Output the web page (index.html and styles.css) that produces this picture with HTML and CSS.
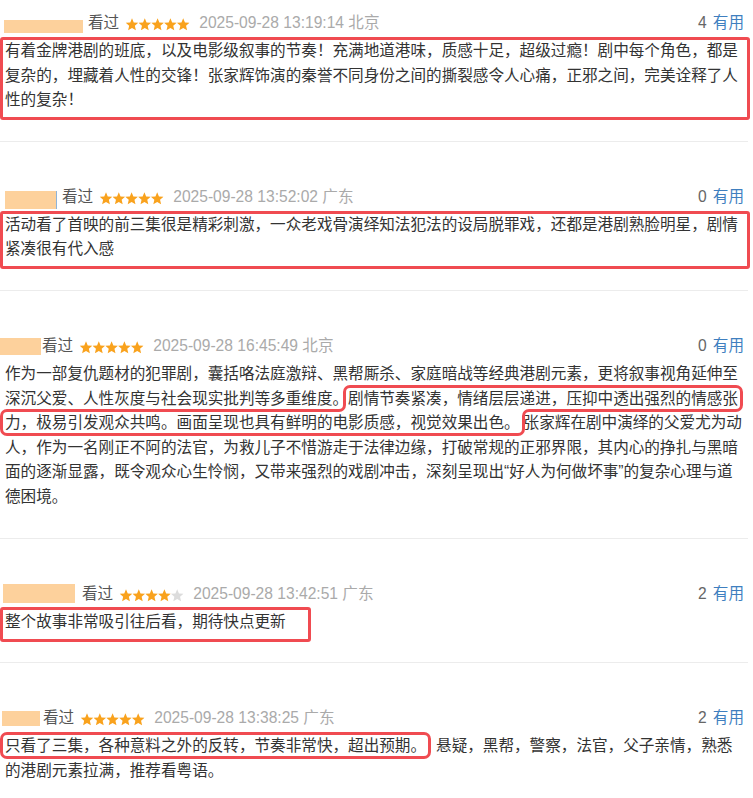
FILE: index.html
```html
<!DOCTYPE html>
<html lang="zh-CN">
<head>
  <meta charset="UTF-8" />
  <meta name="viewport" content="width=device-width, initial-scale=1.0"/>
  <title>短评</title>
  <link rel="stylesheet" href="styles.css">
</head>
<body>

<svg class="defs" aria-hidden="true">
  <symbol id="star" viewBox="0 0 13 13">
    <polygon points="6.5,0.3 8.26,4.47 12.78,4.86 9.35,7.83 10.38,12.24 6.5,9.9 2.62,12.24 3.65,7.83 0.22,4.86 4.74,4.47"/>
  </symbol>
</svg>

<ul class="comment-list">

  <li class="comment-item">
    <div class="comment-info">
      <span class="user-mask mask-1"></span>
      <span class="watched">看过</span>
      <svg class="stars" viewBox="0 0 64 13">
        <use href="#star" class="on" x="0" width="13" height="13"/>
        <use href="#star" class="on" x="12.8" width="13" height="13"/>
        <use href="#star" class="on" x="25.6" width="13" height="13"/>
        <use href="#star" class="on" x="38.4" width="13" height="13"/>
        <use href="#star" class="on" x="51.2" width="13" height="13"/>
      </svg>
      <span class="comment-time">2025-09-28 13:19:14 北京</span>
      <span class="votes"><span class="vote-count">4</span><a class="vote-useful">有用</a></span>
    </div>
    <p class="comment-content marked">有着金牌港剧的班底，以及电影级叙事的节奏！充满地道港味，质感十足，超级过瘾！剧中每个角色，都是复杂的，埋藏着人性的交锋！张家辉饰演的秦誉不同身份之间的撕裂感令人心痛，正邪之间，完美诠释了人性的复杂！</p>
  </li>

  <li class="comment-item">
    <div class="comment-info">
      <span class="user-mask mask-2"></span>
      <span class="watched">看过</span>
      <svg class="stars" viewBox="0 0 64 13">
        <use href="#star" class="on" x="0" width="13" height="13"/>
        <use href="#star" class="on" x="12.8" width="13" height="13"/>
        <use href="#star" class="on" x="25.6" width="13" height="13"/>
        <use href="#star" class="on" x="38.4" width="13" height="13"/>
        <use href="#star" class="on" x="51.2" width="13" height="13"/>
      </svg>
      <span class="comment-time">2025-09-28 13:52:02 广东</span>
      <span class="votes"><span class="vote-count">0</span><a class="vote-useful">有用</a></span>
    </div>
    <p class="comment-content marked">活动看了首映的前三集很是精彩刺激，一众老戏骨演绎知法犯法的设局脱罪戏，还都是港剧熟脸明星，剧情紧凑很有代入感</p>
  </li>

  <li class="comment-item">
    <div class="comment-info">
      <span class="user-mask mask-3"></span>
      <span class="watched">看过</span>
      <svg class="stars" viewBox="0 0 64 13">
        <use href="#star" class="on" x="0" width="13" height="13"/>
        <use href="#star" class="on" x="12.8" width="13" height="13"/>
        <use href="#star" class="on" x="25.6" width="13" height="13"/>
        <use href="#star" class="on" x="38.4" width="13" height="13"/>
        <use href="#star" class="on" x="51.2" width="13" height="13"/>
      </svg>
      <span class="comment-time">2025-09-28 16:45:49 北京</span>
      <span class="votes"><span class="vote-count">0</span><a class="vote-useful">有用</a></span>
    </div>
    <p class="comment-content">作为一部复仇题材的犯罪剧，囊括咯法庭激辩、黑帮厮杀、家庭暗战等经典港剧元素，更将叙事视角延伸至深沉父爱、人性灰度与社会现实批判等多重维度。<span class="mark-inline mark-mid">剧情节奏紧凑，情绪层层递进，压抑中透出强烈的情感张力，极易引发观众共鸣。画面呈现也具有鲜明的电影质感，视觉效果出色。</span>张家辉在剧中演绎的父爱尤为动人，作为一名刚正不阿的法官，为救儿子不惜游走于法律边缘，打破常规的正邪界限，其内心的挣扎与黑暗面的逐渐显露，既令观众心生怜悯，又带来强烈的戏剧冲击，深刻呈现出“好人为何做坏事”的复杂心理与道德困境。</p>
  </li>

  <li class="comment-item">
    <div class="comment-info">
      <span class="user-mask mask-4"></span>
      <span class="watched">看过</span>
      <svg class="stars" viewBox="0 0 64 13">
        <use href="#star" class="on" x="0" width="13" height="13"/>
        <use href="#star" class="on" x="12.8" width="13" height="13"/>
        <use href="#star" class="on" x="25.6" width="13" height="13"/>
        <use href="#star" class="on" x="38.4" width="13" height="13"/>
        <use href="#star" class="off" x="51.2" width="13" height="13"/>
      </svg>
      <span class="comment-time">2025-09-28 13:42:51 广东</span>
      <span class="votes"><span class="vote-count">2</span><a class="vote-useful">有用</a></span>
    </div>
    <p class="comment-content"><span class="mark-box">整个故事非常吸引往后看，期待快点更新</span></p>
  </li>

  <li class="comment-item">
    <div class="comment-info">
      <span class="user-mask mask-5"></span>
      <span class="watched">看过</span>
      <svg class="stars" viewBox="0 0 64 13">
        <use href="#star" class="on" x="0" width="13" height="13"/>
        <use href="#star" class="on" x="12.8" width="13" height="13"/>
        <use href="#star" class="on" x="25.6" width="13" height="13"/>
        <use href="#star" class="on" x="38.4" width="13" height="13"/>
        <use href="#star" class="on" x="51.2" width="13" height="13"/>
      </svg>
      <span class="comment-time">2025-09-28 13:38:25 广东</span>
      <span class="votes"><span class="vote-count">2</span><a class="vote-useful">有用</a></span>
    </div>
    <p class="comment-content"><span class="mark-inline mark-tail">只看了三集，各种意料之外的反转，节奏非常快，超出预期。</span>悬疑，黑帮，警察，法官，父子亲情，熟悉的港剧元素拉满，推荐看粤语。</p>
  </li>

</ul>

</body>
</html>
```

FILE: styles.css
```css
body {
  margin: 0;
  background: #fff;
  font-family: "Liberation Sans", Arial, "Noto Sans CJK SC", sans-serif;
  color: #333;
}
.defs {
  display: none;
}
.comment-list {
  list-style: none;
  margin: 0;
  padding: 12px 0 0;
  width: 748px;
}
.comment-item {
  padding: 44px 0 28px;
  border-bottom: 1px solid #ececec;
}
.comment-item:first-child {
  padding-top: 0;
}
.comment-info {
  display: flex;
  align-items: center;
  height: 22px;
  padding-right: 4px;
  font-size: 15.6px;
  line-height: 22px;
}
.user-mask {
  background: #fdd19c;
  flex-shrink: 0;
}
.mask-1 { width: 79px; height: 13px; margin: 7px 5px 0 4px; }
.mask-2 { width: 50px; height: 18px; margin: 6px 5px 0 5px; border-right: 1px solid #8fb4d9; padding-right: 1px; }
.mask-3 { width: 41px; height: 17px; margin: 1px 1px 0 0; }
.mask-4 { width: 72px; height: 19px; margin: 0 7px 0 3px; }
.mask-5 { width: 38px; height: 15px; margin: 1px 3px 0 2px; }

.watched {
  color: #555;
}
.stars {
  width: 65px;
  height: 13px;
  margin: 3px 9px 0 6px;
}
.stars .on { fill: #f9a21d; }
.stars .off { fill: #dcdcdc; }
.comment-time {
  color: #aaa;
}
.votes {
  margin-left: auto;
  color: #666;
}
.vote-useful {
  margin-left: 6px;
  color: #3f7fbf;
  text-decoration: none;
}
.comment-content {
  margin: 5px 0 0;
  padding: 0 5px;
  font-size: 15.6px;
  line-height: 24.6px;
  color: #333;
}

/* red annotation frames */
.marked {
  position: relative;
}
.marked::after {
  content: "";
  position: absolute;
  left: 0;
  right: -2px;
  top: -2px;
  bottom: -7px;
  border: 3px solid #f04b51;
  border-radius: 3px;
}
.mark-inline {
  outline: 3px solid #f04b51;
  outline-offset: 2px;
  border-radius: 2px;
}
.mark-mid {
  margin-right: 4px;
}
.mark-tail {
  margin-right: 10px;
}
.mark-box {
  display: inline-block;
  position: relative;
}
.mark-box::after {
  content: "";
  position: absolute;
  left: -5px;
  right: -25px;
  top: -3px;
  bottom: -8px;
  border: 3px solid #f04b51;
  border-radius: 3px;
}
```
